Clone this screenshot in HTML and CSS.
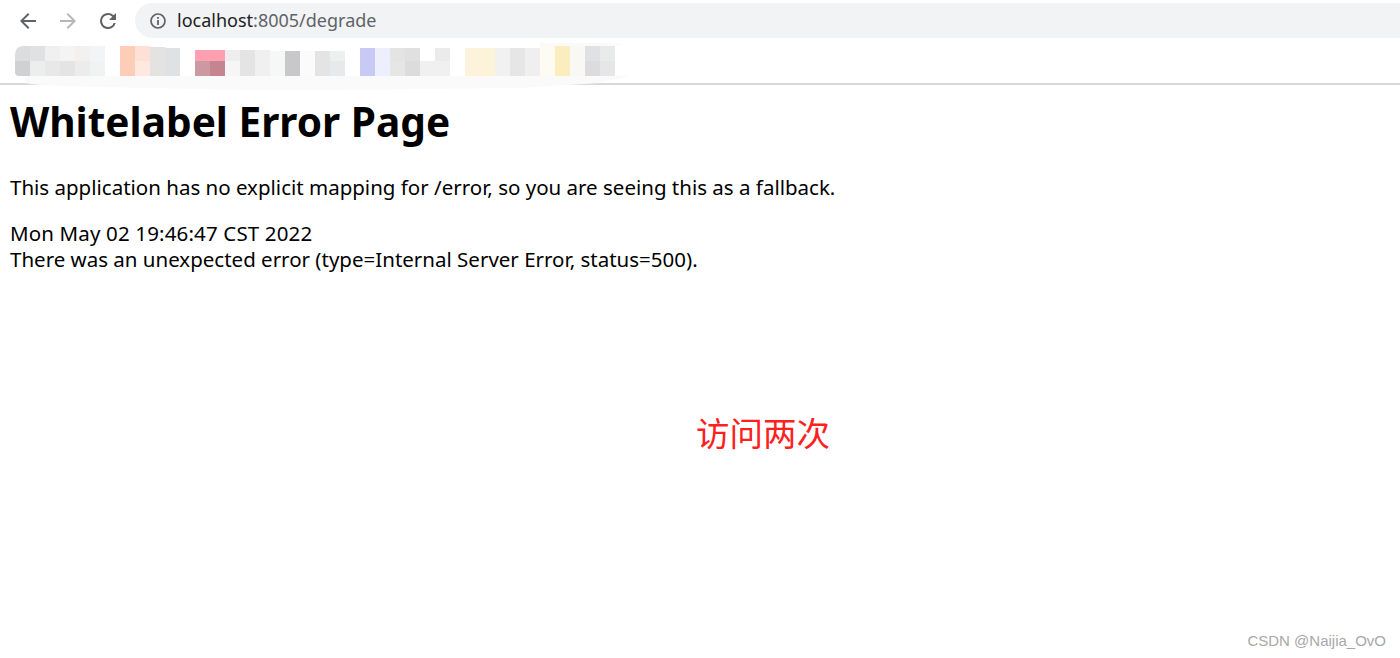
FILE: index.html
```html
<!DOCTYPE html>
<html lang="en">
<head>
    <meta charset="UTF-8">
    <meta name="viewport" content="width=device-width, initial-scale=1.0">
    <title>Whitelabel Error Page</title>
    <link rel="stylesheet" href="styles.css">
</head>
<body>

    <div class="browser-bar">
        <div class="toolbar">
            <!-- Back, forward, reload -->
            <div class="nav-buttons">
                <svg class="nav-icon" width="24" height="24" viewBox="0 0 24 24"><path d="M20 11H7.8l5.6-5.6L12 4l-8 8 8 8 1.4-1.4L7.8 13H20z" fill="#5f6368"/></svg>
                <svg class="nav-icon" width="24" height="24" viewBox="0 0 24 24"><path d="M4 11h12.2l-5.6-5.6L12 4l8 8-8 8-1.4-1.4 5.6-5.6H4z" fill="#b4b6b8"/></svg>
                <svg class="nav-icon" width="24" height="24" viewBox="0 0 24 24"><path d="M17.65 6.35A7.96 7.96 0 0 0 12 4a8 8 0 1 0 7.73 10h-2.08A6 6 0 1 1 12 6c1.66 0 3.14.69 4.22 1.78L13 11h7V4z" fill="#5f6368"/></svg>
            </div>

            <div class="address">
                <svg class="info-icon" width="18" height="18" viewBox="0 0 18 18">
                    <circle cx="9" cy="9" r="7" fill="none" stroke="#5f6368" stroke-width="1.7"/>
                    <rect x="8.1" y="8" width="1.8" height="5" fill="#5f6368"/>
                    <rect x="8.1" y="5" width="1.8" height="1.8" fill="#5f6368"/>
                </svg>
                <span class="host">localhost</span><span class="path">:8005/degrade</span>
            </div>
        </div>

        <!-- Bookmarks were pixelated in the original -->
        <svg class="bookmarks" width="640" height="50" viewBox="0 0 640 50">
            <path d="M25 34 V41 Q40 44 100 45 L250 48 H330 L520 46 L600 41 L630 34z" fill="#fafafa"/>
            <path d="M15 34 H25 V41 H15z" fill="#fff"/>
            <path d="M540 4 V1 L600 1 L625 2 L615 4z" fill="#fafafa"/>
            <path d="M30 4 H24 Q15 4 15 13 V19 H30z" fill="#dcdddf"/><path d="M30 19 H15 V30 Q15 34 19 34 H30z" fill="#d0d1d3"/>
            <rect x="30" y="4" width="15" height="15" fill="#e0e1e3"/><rect x="30" y="19" width="15" height="15" fill="#eceded"/>
            <rect x="45" y="4" width="15" height="15" fill="#f0f0f0"/><rect x="45" y="19" width="15" height="15" fill="#e8e8e8"/>
            <rect x="60" y="4" width="15" height="15" fill="#f4f4f4"/><rect x="60" y="19" width="15" height="15" fill="#e4e4e4"/>
            <rect x="75" y="4" width="15" height="15" fill="#f2f1ef"/><rect x="75" y="19" width="15" height="15" fill="#ececec"/>
            <rect x="90" y="4" width="15" height="15" fill="#f3f4f5"/><rect x="90" y="19" width="15" height="15" fill="#f1f2f2"/>
            <rect x="120" y="4" width="15" height="15" fill="#fecdb8"/><rect x="120" y="19" width="15" height="15" fill="#fecdb8"/>
            <rect x="135" y="4" width="15" height="15" fill="#fee0d6"/><rect x="135" y="19" width="15" height="15" fill="#fee8e0"/>
            <rect x="150" y="5" width="15" height="14" fill="#e4e3e1"/><rect x="150" y="19" width="15" height="15" fill="#e4e3e1"/>
            <rect x="165" y="6" width="15" height="13" fill="#e0e1e3"/><rect x="165" y="19" width="15" height="15" fill="#e0e1e3"/>
            <rect x="195" y="8" width="15" height="11" fill="#fea0b0"/><rect x="195" y="19" width="15" height="15" fill="#cc98a2"/>
            <rect x="210" y="8" width="15" height="11" fill="#fea0b0"/><rect x="210" y="19" width="15" height="15" fill="#c48490"/>
            <rect x="225" y="8" width="15" height="11" fill="#eeeeee"/><rect x="225" y="19" width="15" height="15" fill="#f6f6f6"/>
            <rect x="240" y="8" width="15" height="11" fill="#e4e4e4"/><rect x="240" y="19" width="15" height="15" fill="#e4e4e4"/>
            <rect x="255" y="8" width="15" height="11" fill="#eff0ef"/><rect x="255" y="19" width="15" height="15" fill="#eff0ef"/>
            <rect x="270" y="9" width="15" height="25" fill="#f6f7f7"/>
            <rect x="285" y="9" width="15" height="25" fill="#c8c8ca"/>
            <rect x="300" y="9" width="15" height="25" fill="#fbfbfb"/>
            <rect x="315" y="9" width="15" height="25" fill="#e4e4e4"/>
            <rect x="330" y="9" width="15" height="10" fill="#eeefef"/><rect x="330" y="19" width="15" height="15" fill="#e8e9ea"/>
            <rect x="360" y="6" width="15" height="28" fill="#c8c9f4"/>
            <rect x="375" y="6" width="15" height="28" fill="#eeeffc"/>
            <rect x="390" y="6" width="15" height="13" fill="#e4e4e4"/><rect x="390" y="19" width="15" height="15" fill="#e6e6e4"/>
            <rect x="405" y="6" width="15" height="13" fill="#e0e0e0"/><rect x="405" y="19" width="15" height="15" fill="#dcdcdc"/>
            <rect x="420" y="19" width="15" height="15" fill="#f0f0f0"/>
            <rect x="435" y="6" width="15" height="13" fill="#ebebeb"/><rect x="435" y="19" width="15" height="15" fill="#f0f0f0"/>
            <rect x="465" y="6" width="15" height="28" fill="#fdf3dc"/>
            <rect x="480" y="6" width="15" height="28" fill="#fdf3d8"/>
            <rect x="495" y="6" width="15" height="28" fill="#f1f1f1"/>
            <rect x="510" y="6" width="15" height="28" fill="#e6e6e6"/>
            <rect x="525" y="6" width="15" height="28" fill="#efefef"/>
            <rect x="540" y="4" width="15" height="30" fill="#fefbf2"/>
            <rect x="555" y="4" width="15" height="30" fill="#fcedbe"/>
            <rect x="570" y="4" width="15" height="30" fill="#faf8f4"/>
            <rect x="585" y="4" width="15" height="15" fill="#e0e1e3"/><rect x="585" y="19" width="15" height="15" fill="#dcdcde"/>
            <rect x="600" y="4" width="15" height="15" fill="#e9ebeb"/><rect x="600" y="19" width="15" height="15" fill="#e6e6e6"/>
        </svg>
    </div>

    <div class="content">
        <h1>Whitelabel Error Page</h1>
        <p>This application has no explicit mapping for /error, so you are seeing this as a fallback.</p>
        <div class="created">Mon May 02 19:46:47 CST 2022</div>
        <div>There was an unexpected error (type=Internal Server Error, status=500).</div>
    </div>

    <div class="note">访问两次</div>
    <div class="watermark">CSDN @Naijia_OvO</div>

</body>
</html>
```
FILE: styles.css
```css
body {
    margin: 0;
    height: 658px;
    overflow: hidden;
    position: relative;
    font-family: "Noto Sans", "Noto Sans CJK SC", sans-serif;
    background-color: white;
    color: black;
}

.browser-bar {
    height: 83px;
    border-bottom: 2px solid #d8d8dc;
    position: relative;
}

.toolbar {
    display: flex;
    align-items: center;
    padding-top: 3px;
    height: 35px;
}

.nav-buttons {
    display: flex;
    gap: 16px;
    padding-left: 16px;
    width: 119px;
}

.address {
    flex: 1;
    height: 35px;
    margin-right: -20px;
    display: flex;
    align-items: center;
    padding-left: 14px;
    background-color: #f1f3f4;
    border-radius: 18px;
    font-size: 18px;
}

.info-icon {
    margin-right: 10px;
}

.host {
    color: #202124;
    margin-bottom: 2px;
}

.path {
    color: #5f6368;
    margin-bottom: 2px;
}

.bookmarks {
    position: absolute;
    left: 0;
    top: 42px;
}

.content {
    padding: 0 10px;
}

h1 {
    font-size: 40.6px;
    font-weight: bold;
    line-height: 54px;
    margin: 10px 0 0 0;
}

.content p {
    font-size: 20.5px;
    line-height: 26px;
    margin: 25px 0 20px 0;
}

.content div {
    font-size: 20.5px;
    line-height: 26px;
}

.content .created {
    letter-spacing: 0.15px;
}

.note {
    position: absolute;
    left: 696px;
    top: 410px;
    font-family: "Noto Sans CJK SC", sans-serif;
    font-size: 33.5px;
    line-height: 44px;
    color: #ff2020;
}

.watermark {
    position: absolute;
    right: 14px;
    top: 631px;
    font-family: "Liberation Sans", sans-serif;
    font-size: 15px;
    line-height: 20px;
    color: #a8a8a8;
}
```
